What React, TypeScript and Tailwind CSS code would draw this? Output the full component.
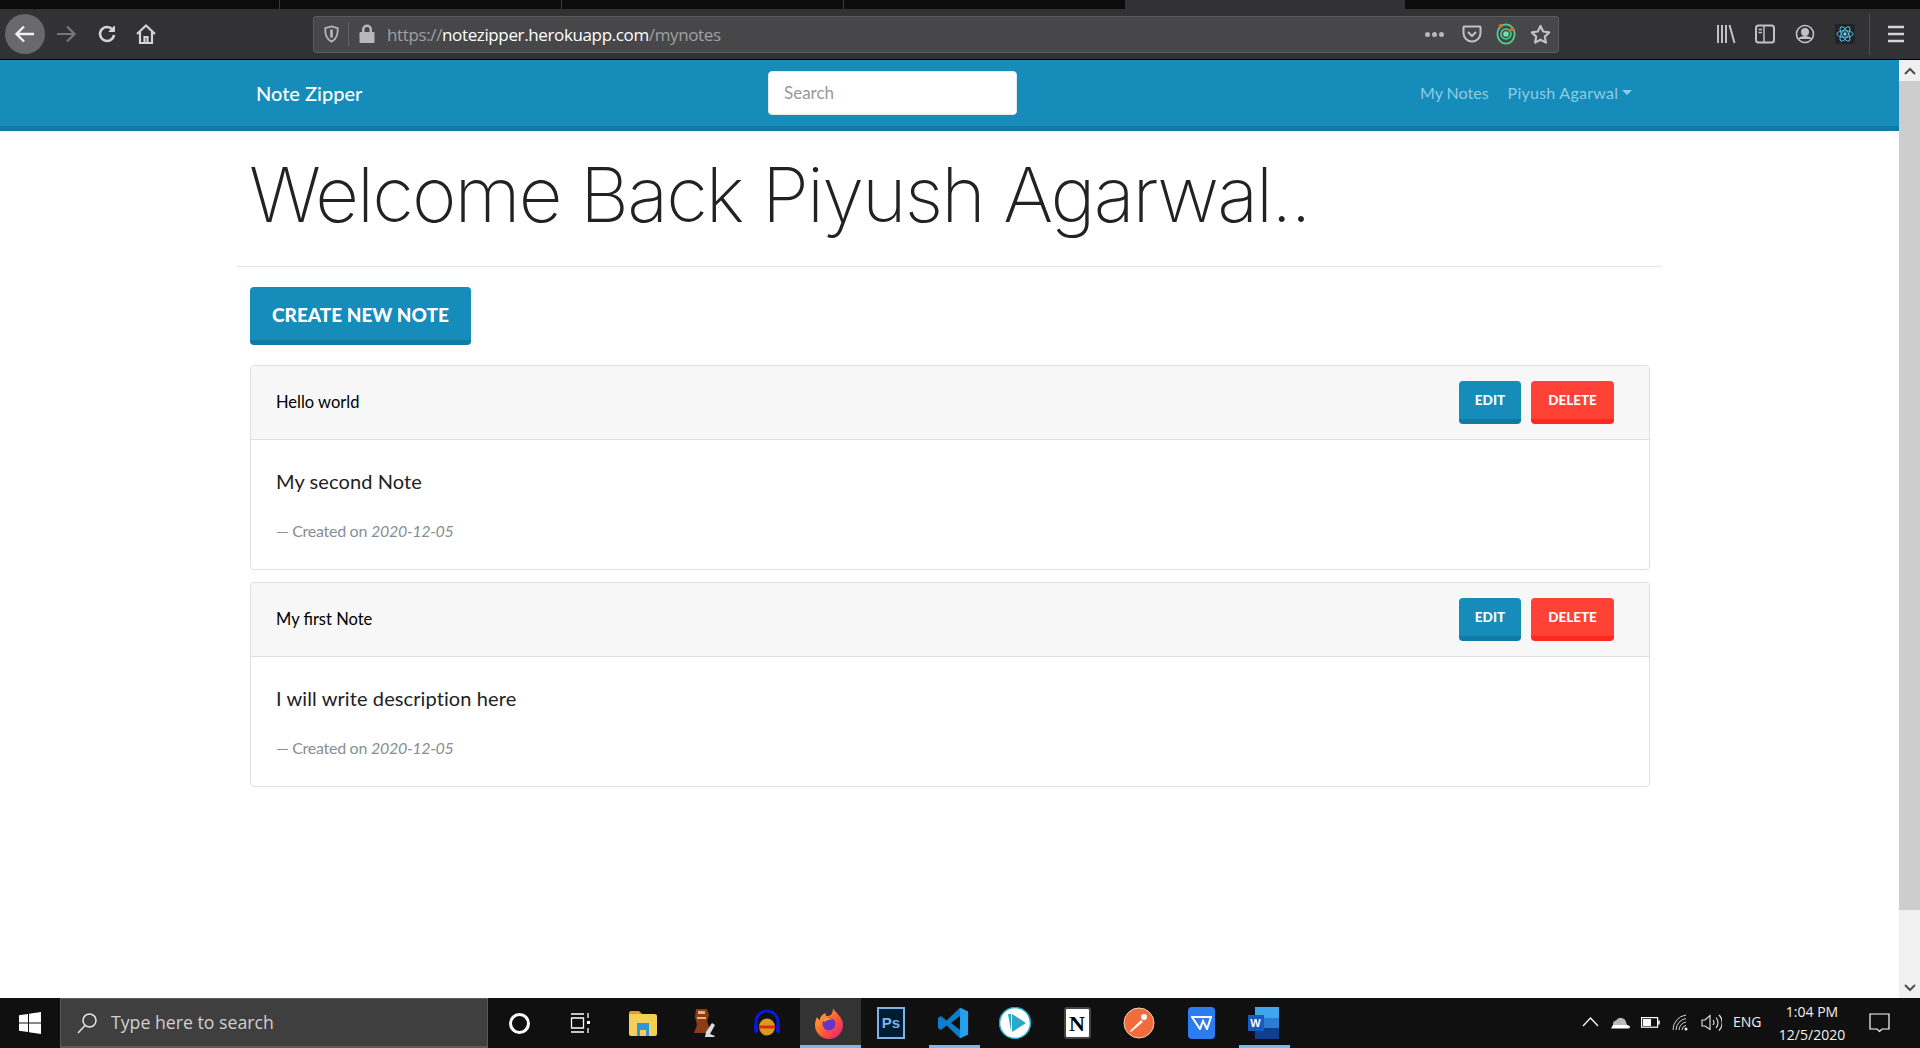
import React from "react";

const S = "font-['Lato','Liberation_Sans',sans-serif]";

function TB({ children, active, under }: { children: React.ReactNode; active?: boolean; under?: boolean }) {
  return (
    <div className="relative w-[62px] h-full flex items-center justify-center">
      {active && <div className="absolute inset-y-0 left-[2px] right-[-1px] bg-[#333333] border-b-[3px] border-[#76b9ed]" />}
      <div className="relative flex items-center justify-center">{children}</div>
      {under && <div className="absolute bottom-0 left-[7px] w-[51px] h-[3px] bg-[#76b9ed]" />}
    </div>
  );
}

function Note({ title, body }: { title: string; body: string }) {
  return (
    <div className="border border-[#dfdfdf] rounded-[4px] overflow-hidden h-[205px] bg-white">
      <div className="h-[74px] bg-[#f7f7f7] border-b border-[#dfdfdf] flex items-center justify-between pl-[25px] pr-[35px]">
        <span className="text-[16.5px] text-black">{title}</span>
        <div className="flex gap-[10px]">
          <button className="w-[62px] h-[43px] rounded-[4px] bg-[#158cba] border-b-[5px] border-[#127ba3] text-white text-[13.5px] font-black">EDIT</button>
          <button className="w-[83px] h-[43px] rounded-[4px] bg-[#ff4136] border-b-[5px] border-[#ff291d] text-white text-[13.5px] font-black">DELETE</button>
        </div>
      </div>
      <div className="pl-[25px] pt-[27px]">
        <div className="text-[20px] leading-[28px] text-[#222222] tracking-[0.1px]">{body}</div>
        <div className="mt-[24px] text-[16px] leading-[24px] text-[#868e96] tracking-[-0.28px]">
          — Created on <i>2020-12-05</i>
        </div>
      </div>
    </div>
  );
}

export default function App() {
  return (
    <div className={`h-[1048px] w-[1920px] overflow-hidden flex flex-col bg-white ${S}`}>
      {/* tab strip */}
      <div className="h-[9px] flex bg-[#0c0c0c] shrink-0">
        <div className="w-[280px] border-r border-[#3a3a3a]" />
        <div className="w-[282px] border-r border-[#3a3a3a]" />
        <div className="w-[282px] border-r border-[#3a3a3a]" />
        <div className="w-[281px]" />
        <div className="w-[280px] bg-[#323234]" />
      </div>

      {/* browser toolbar */}
      <div className="h-[51px] shrink-0 bg-[#323234] border-b border-black flex items-center text-[#d4d4d6]">
        <div className="w-[313px] flex items-center shrink-0 pl-[5px]">
          <div className="w-[40px] h-[40px] rounded-full bg-[#69696b] flex items-center justify-center">
            <svg width="24" height="24" viewBox="0 0 24 24" fill="none" stroke="#f0f0f0" strokeWidth="2.4"><path d="M21 12H4M11 4.5 3.5 12l7.5 7.5" /></svg>
          </div>
          <svg className="ml-[9px]" width="24" height="24" viewBox="0 0 24 24" fill="none" stroke="#77777a" strokeWidth="2.2"><path d="M3 12h17M13 4.5l7.500 7.500-7.500 7.500" /></svg>
          <svg className="ml-[18px]" width="22" height="22" viewBox="0 0 22 22" fill="none" stroke="#d4d4d6" strokeWidth="2.6"><path d="M16.500 6.500A7 7 0 1 0 18 12" /><path d="M18.500 3v5.500H13z" fill="#d4d4d6" strokeWidth="1" /></svg>
          <svg className="ml-[17px]" width="22" height="22" viewBox="0 0 22 22" fill="none" stroke="#d4d4d6" strokeWidth="2.2"><path d="M2 11 11 2.500 20 11M5 9v11h12V9M9.500 20v-6h3v6" /></svg>
        </div>
        <div className="w-[1246px] h-[37px] shrink-0 rounded-[3px] bg-[#47474a] border border-[#5c5c5f] flex items-center">
          <div className="w-[35px] flex justify-center border-r border-[#636366] h-[24px] items-center">
            <svg width="17" height="18" viewBox="0 0 18 20" fill="none" stroke="#b5b5b7" strokeWidth="2"><path d="M9 1.500 2 3.500c0 7 1 11.500 7 15 6-3.500 7-8 7-15z" /><path d="M9 5v9" strokeWidth="3" /></svg>
          </div>
          <svg className="ml-[10px]" width="16" height="20" viewBox="0 0 16 20" fill="#b8b8ba"><path d="M3 8V5.500a5 5 0 0 1 10 0V8h1.500a1 1 0 0 1 1 1v9a1 1 0 0 1-1 1h-13a1 1 0 0 1-1-1V9a1 1 0 0 1 1-1zM5.500 8h5V5.500a2.500 2.500 0 0 0-5 0z" /></svg>
          <div className="ml-[12px] pt-[2px] text-[17px] font-['Open_Sans',sans-serif] tracking-[-0.37px] text-[#a0a0a2] whitespace-nowrap">
            https://<span className="text-white">notezipper.herokuapp.com</span>/mynotes
          </div>
          <div className="ml-auto flex items-center pr-[7px]">
            <span className="flex gap-[2px] mr-[18px]">
              <i className="w-[5px] h-[5px] rounded-full bg-[#b8b8ba]" />
              <i className="w-[5px] h-[5px] rounded-full bg-[#b8b8ba]" />
              <i className="w-[5px] h-[5px] rounded-full bg-[#b8b8ba]" />
            </span>
            <svg width="20" height="20" viewBox="0 0 20 20" fill="none" stroke="#c2c2c4" strokeWidth="2"><path d="M2 2.500h16a1 1 0 0 1 .5.800V9a8.500 8.500 0 0 1-17 0V3.300a1 1 0 0 1 .5-.8z" /><path d="m6 8 4 4 4-4" /></svg>
            <svg className="ml-[14px]" width="20" height="22" viewBox="0 0 20 22" fill="none"><ellipse cx="10" cy="11" rx="8.600" ry="9.600" stroke="#4ed08a" strokeWidth="1.8" /><circle cx="10" cy="11" r="5" stroke="#4ed08a" strokeWidth="1.6" /><circle cx="10" cy="11" r="2.800" fill="#6fe3a8" /><circle cx="4.500" cy="3" r="2" fill="#e4662a" /><circle cx="16" cy="6" r="2" fill="#e4662a" /></svg>
            <svg className="ml-[14px]" width="21" height="21" viewBox="0 0 21 21" fill="none" stroke="#c2c2c4" strokeWidth="2.2" strokeLinejoin="round"><path d="m10.500 2 2.700 5.500 6 .9-4.400 4.200 1.100 6-5.400-2.900-5.400 2.900 1.100-6L1.800 8.400l6-.9z" /></svg>
          </div>
        </div>
        <div className="flex-1 flex items-center relative h-full">
          <svg className="absolute left-[157px] top-[15px]" width="20" height="20" viewBox="0 0 20 20" fill="none" stroke="#c2c2c4" strokeWidth="2"><path d="M2 1v18M6 1v18M10 1v18M13.500 1 18.500 19" /></svg>
          <svg className="absolute left-[196px] top-[15px]" width="20" height="20" viewBox="0 0 20 20" fill="none" stroke="#c2c2c4" strokeWidth="2"><rect x="1" y="1.500" width="18" height="17" rx="2.500" /><path d="M9 1.500v17M3.500 5.500H7M3.500 8.500H7" strokeWidth="1.5" /></svg>
          <svg className="absolute left-[236px] top-[15px]" width="20" height="20" viewBox="0 0 20 20" fill="none" stroke="#c2c2c4" strokeWidth="1.6"><circle cx="10" cy="10" r="8.500" /><circle cx="10" cy="8" r="3.200" fill="#c2c2c4" /><path d="M4 15c2-3 10-3 12 0" fill="#c2c2c4" /></svg>
          <div className="absolute left-[276px] top-[15px] w-[20px] h-[20px] rounded-[2px] bg-[#20232a] flex items-center justify-center">
            <svg width="18" height="18" viewBox="-11 -11 22 22" fill="none" stroke="#61dafb" strokeWidth="1"><circle r="2" fill="#61dafb" stroke="none" /><ellipse rx="10" ry="4" /><ellipse rx="10" ry="4" transform="rotate(60)" /><ellipse rx="10" ry="4" transform="rotate(120)" /></svg>
          </div>
          <div className="absolute left-[310px] top-[4px] w-px h-[42px] bg-[#4e4e50]" />
          <svg className="absolute left-[329px] top-[16px]" width="16" height="18" viewBox="0 0 16 18" stroke="#d4d4d6" strokeWidth="2.400"><path d="M0 2h16M0 9h16M0 16h16" /></svg>
        </div>
      </div>

      {/* page + scrollbar */}
      <div className="flex-1 flex min-h-0">
        <div className="flex-1 min-w-0 flex flex-col">
          <nav className="h-[71px] shrink-0 bg-[#158cba] border-b-[5px] border-[#127ba3] flex items-center">
            <div className="w-[768px] pl-[256px] text-white text-[20px] font-medium">Note Zipper</div>
            <div className="w-[249px] h-[44px] bg-white rounded-[4px] border border-[#e8e8e8] flex items-center pl-[15px] text-[#999999] text-[17px]">Search</div>
            <div className="ml-[403px] flex items-center text-[#8fcbe3] text-[16px]">
              <span>My Notes</span>
              <span className="ml-[19px] tracking-[0.25px]">Piyush Agarwal</span>
              <span className="ml-[4px] mb-[2px] w-0 h-0 border-x-[5px] border-x-transparent border-t-[5px] border-t-[#8fcbe3]" />
            </div>
          </nav>
          <main className="w-[1425px] mx-auto flex-1">
            <div className="h-[136px] border-b border-[#e5e5e5] pl-[12px] pt-[15px]">
              <h1 className="font-['Inter',sans-serif] font-extralight text-[76px] leading-[96px] tracking-[-1.9px] text-[#222222] whitespace-nowrap">Welcome Back Piyush Agarwal..</h1>
            </div>
            <div className="px-[13px]">
              <button className="mt-[20px] block w-[221px] h-[58px] pt-[3px] rounded-[4px] bg-[#158cba] border-b-[5px] border-[#127ba3] text-white text-[19px] font-black">CREATE NEW NOTE</button>
              <div className="mt-[20px] flex flex-col gap-[12px] mr-[-1px]">
                <Note title="Hello world" body="My second Note" />
                <Note title="My first Note" body="I will write description here" />
              </div>
            </div>
          </main>
        </div>
        <div className="w-[21px] shrink-0 bg-[#f0f0f0] flex flex-col">
          <div className="h-[21px] flex items-center justify-center">
            <svg width="12" height="8" viewBox="0 0 12 8" fill="none" stroke="#505050" strokeWidth="2"><path d="m1 7 5-5 5 5" /></svg>
          </div>
          <div className="h-[829px] bg-[#cdcdcd]" />
          <div className="mt-auto h-[21px] flex items-center justify-center">
            <svg width="12" height="8" viewBox="0 0 12 8" fill="none" stroke="#505050" strokeWidth="2"><path d="m1 1 5 5 5-5" /></svg>
          </div>
        </div>
      </div>

      {/* taskbar */}
      <div className="h-[50px] shrink-0 bg-[#101010] flex items-center font-['Open_Sans',sans-serif]">
        <div className="w-[60px] flex justify-center">
          <svg width="22" height="22" viewBox="0 0 22 22" fill="#fff"><path d="M0 3.200 9 2v8.500H0zM10 1.800 22 0v10.500H10zM0 11.500h9V20l-9-1.200zM10 11.500h12V22l-12-1.800z" /></svg>
        </div>
        <div className="w-[428px] h-full bg-[#3f3f3f] border border-[#5a5a5a] border-b-2 flex items-center pl-[15px] text-[#d0d0d0] text-[17.700px]">
          <svg width="22" height="22" viewBox="0 0 22 22" fill="none" stroke="#e4e4e4" strokeWidth="1.5"><circle cx="13.500" cy="8.500" r="6.500" /><path d="M9 13.500 2 21" /></svg>
          <span className="ml-[13px]">Type here to search</span>
        </div>
        <div className="flex h-full items-center">
          <TB><div className="w-[21px] h-[21px] rounded-full border-[3px] border-white" /></TB>
          <TB>
            <svg width="22" height="22" viewBox="0 0 22 22" fill="none" stroke="#fff" strokeWidth="1.3"><path d="M1 2h13M1 20h13M1.500 6h12v10h-12z" /><path d="M18 1v5M18 16v5" /><rect x="17" y="9" width="3" height="3" fill="#fff" stroke="none" /></svg>
          </TB>
          <TB>
            <svg width="30" height="26" viewBox="0 0 30 26"><path d="M1 3a2 2 0 0 1 2-2h8l3 3H1z" fill="#d9a21b" /><path d="M1 4h26a2 2 0 0 1 2 2v18a2 2 0 0 1-2 2H3a2 2 0 0 1-2-2z" fill="#f6cf58" /><path d="M9 13h12v13h-3v-6h-6v6H9z" fill="#2f95dc" /></svg>
          </TB>
          <TB>
            <svg width="24" height="32" viewBox="0 0 24 30"><path d="M3 1h11l2 6-2 6 2 6v6H1l3-8-2-8z" fill="#8a3d16" /><path d="M5 3h7v3H5zM4 9h9v2H4z" fill="#e9b27b" /><path d="m13 24 6-9 3 2-5 9 5 2-1 1H12z" fill="#d9dce0" /></svg>
          </TB>
          <TB>
            <svg width="30" height="30" viewBox="0 0 30 30" fill="none"><path d="M4 20v-6a11 11 0 0 1 22 0v6" stroke="#0a18d8" strokeWidth="3" /><rect x="2" y="16" width="4" height="9" rx="2" fill="#0a18d8" /><rect x="24" y="16" width="4" height="9" rx="2" fill="#0a18d8" /><ellipse cx="15" cy="19" rx="8" ry="8.500" fill="#d99a1d" /><path d="M7 19h16" stroke="#e2281e" strokeWidth="3" /></svg>
          </TB>
          <TB active>
            <svg width="30" height="32" viewBox="0 0 30 32"><defs><linearGradient id="ff" x1="0" y1="0" x2="1" y2="1"><stop offset="0" stopColor="#ffbd2e" /><stop offset="0.55" stopColor="#ff5a36" /><stop offset="1" stopColor="#e31587" /></linearGradient></defs><path d="M19 1c1 4 10 8 10 17a14 14 0 0 1-28 0c0-3 1-6 2-8 1 2 2 3 3 3 0-4 3-6 6-7-1 2 0 3 2 3 3 0 5-3 5-8z" fill="url(#ff)" /><circle cx="15" cy="17" r="6.500" fill="#6b34c9" /><path d="M8 13c3-3 8-3 11 0-3-1-7 0-8 2z" fill="#ff9a3b" /></svg>
          </TB>
          <TB>
            <div className="w-[28px] h-[32px] bg-[#001d34] border-2 border-[#7fb4e6] flex items-center justify-center text-[#7fb4e6] text-[15px] font-bold font-['Liberation_Sans',sans-serif]">Ps</div>
          </TB>
          <TB under>
            <svg width="32" height="34" viewBox="0 0 100 100"><path d="M72 2 97 14v72L72 98 30 58 12 72 3 66V34l9-6 18 14zM72 28 44 50l28 22z" fill="#0e7ecb" /><path d="M72 2 97 14v72L72 98z" fill="#24a0ed" /></svg>
          </TB>
          <TB>
            <svg width="32" height="32" viewBox="0 0 32 32"><circle cx="16" cy="16" r="15.500" fill="#fff" stroke="#1fa3c4" strokeWidth="1.5" /><path d="M13 7 27 16 13 25z" fill="#2aa9c9" /><path d="M9 7h3v17z" fill="#2aa9c9" /></svg>
          </TB>
          <TB>
            <div className="w-[27px] h-[32px] bg-white border-2 border-[#444] rounded-[3px] flex items-center justify-center text-black text-[22px] font-bold font-['Liberation_Serif',serif]">N</div>
          </TB>
          <TB>
            <svg width="32" height="32" viewBox="0 0 32 32"><circle cx="16" cy="16" r="15" fill="#f26b3a" stroke="#f3d0c0" /><path d="m7 24 11-11 2 2L8 25z" fill="#fff" /><circle cx="21" cy="10" r="3" fill="#fff" /></svg>
          </TB>
          <TB>
            <div className="w-[27px] h-[32px] rounded-[4px] bg-[#2a7cf0] flex items-center justify-center">
              <svg width="21" height="14" viewBox="0 0 21 14" fill="none" stroke="#fff" strokeWidth="2"><path d="M1 1h19l-4 12-4-8-3 8z" /></svg>
            </div>
          </TB>
          <TB under>
            <div className="relative w-[31px] h-[32px]">
              <div className="absolute right-0 top-0 w-[24px] h-[32px] bg-[#2b7cd3] rounded-[2px]">
                <div className="h-[11px] bg-[#41a5ee]" />
                <div className="h-[10px] bg-[#2b7cd3]" />
                <div className="h-[11px] bg-[#103f91]" />
              </div>
              <div className="absolute left-0 top-[8px] w-[16px] h-[16px] bg-[#185abd] flex items-center justify-center text-white text-[11px] font-bold font-['Liberation_Sans',sans-serif]">W</div>
            </div>
          </TB>
        </div>
        <div className="ml-auto flex items-center h-full text-white relative w-[345px]">
          <svg className="absolute left-[7px] top-[19px]" width="17" height="10" viewBox="0 0 17 10" fill="none" stroke="#fff" strokeWidth="1.2"><path d="m1 9 7.500-8L16 9" /></svg>
          <svg className="absolute left-[35px] top-[18px]" width="20" height="13" viewBox="0 0 20 13" fill="#fff"><path d="M1 12.500h17.500a1.500 1.500 0 0 0 1-2.500l-2-1H3z" /><path d="M3 8a3.500 3.500 0 0 1 3-3.500 5.500 5.500 0 0 1 10 1.500l1 3H3z" fill="#b9b9b9" /></svg>
          <svg className="absolute left-[66px] top-[19px]" width="19" height="11" viewBox="0 0 19 11" fill="none" stroke="#fff" strokeWidth="1.2"><rect x="0.6" y="0.6" width="16" height="9.600" /><rect x="2" y="2" width="8" height="7" fill="#fff" stroke="none" /><path d="M18 3.500v4" strokeWidth="1.5" /></svg>
          <svg className="absolute left-[97px] top-[16px]" width="17" height="17" viewBox="0 0 17 17" fill="none" stroke="#cfcfcf" strokeWidth="1"><path d="M1 16A15 15 0 0 1 14 1M4 16A12 12 0 0 1 14 4.500M7 16a8.500 8.500 0 0 1 7-8M10 16a5 5 0 0 1 4-4.500" /><circle cx="14" cy="15" r="1.500" fill="#fff" stroke="none" /></svg>
          <svg className="absolute left-[126px] top-[16px]" width="21" height="18" viewBox="0 0 21 18" fill="none" stroke="#e8e8e8" strokeWidth="1.1"><path d="M1 6h3l5-4.500v14L4 12H1zM12 6a4 4 0 0 1 0 5M15 3.500a8 8 0 0 1 0 10.500M18 1a11 11 0 0 1 0 15.500" /></svg>
          <span className="absolute left-[158px] top-[14px] text-[14px] leading-[20px] text-[#f0f0f0]">ENG</span>
          <div className="absolute left-[199px] top-[2px] w-[76px] text-center text-[14px] leading-[23px] text-[#f0f0f0]">1:04 PM<br />12/5/2020</div>
          <svg className="absolute left-[294px] top-[15px]" width="21" height="20" viewBox="0 0 21 20" fill="none" stroke="#fff" strokeWidth="1.2"><path d="M1 1h19v15h-7l-2.500 2.500L8 16H1z" /></svg>
        </div>
      </div>
    </div>
  );
}
